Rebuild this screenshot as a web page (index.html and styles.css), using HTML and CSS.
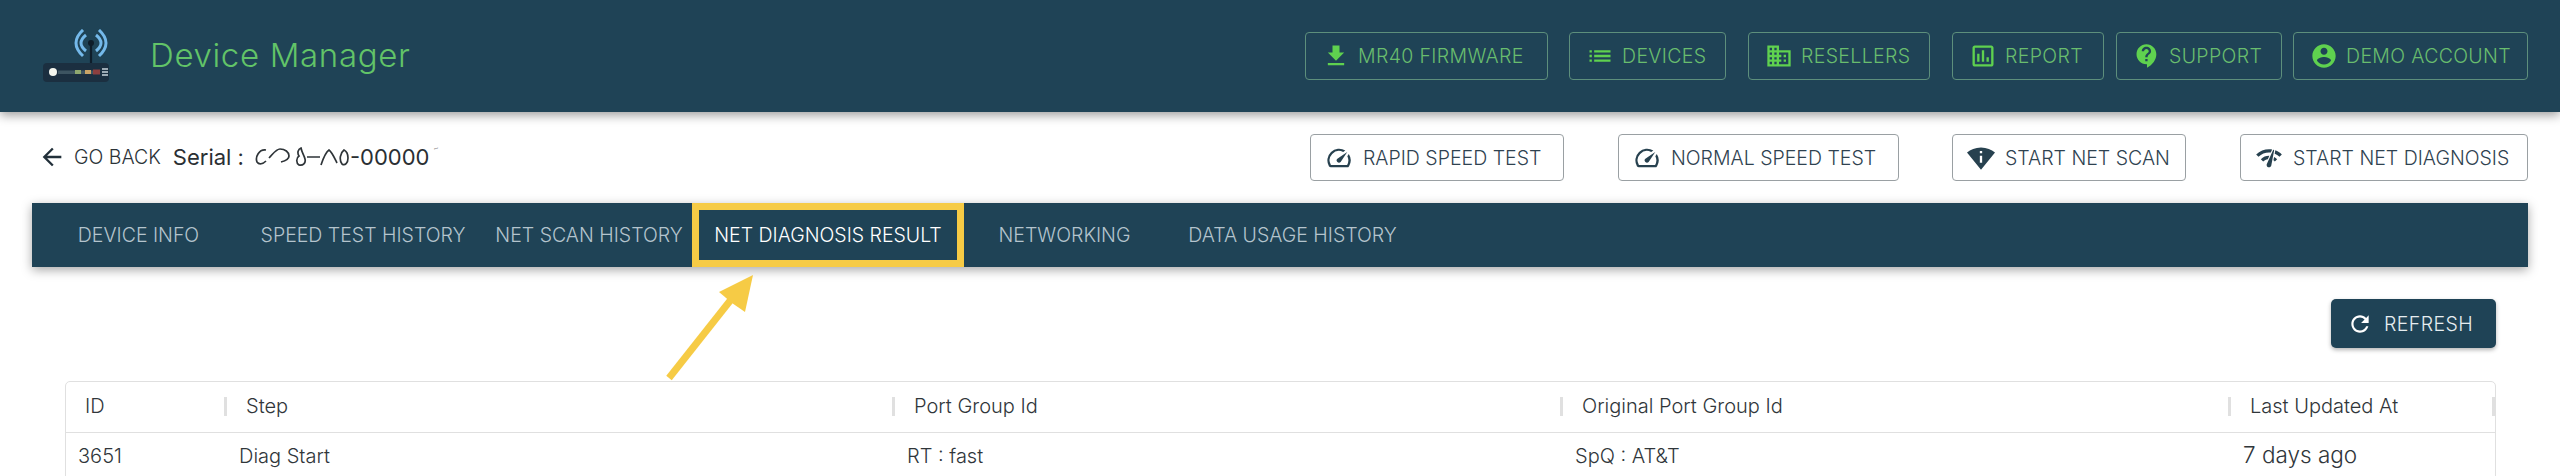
FILE: index.html
```html
<!DOCTYPE html>
<html lang="en">
<head>
<meta charset="utf-8">
<title>Device Manager</title>
<link rel="stylesheet" href="styles.css">
</head>
<body>
<div class="page">
  <header class="topbar">
    <div class="brand">
      <svg class="logo" viewBox="0 0 66 54">
        <rect x="0" y="34" width="66" height="19" rx="4" fill="#1b2f40"/>
        <rect x="15" y="41.5" width="40" height="3.5" fill="#3d5461"/>
        <circle cx="10" cy="43" r="4" fill="#f4f6ee"/>
        <rect x="32" y="41" width="6" height="4" fill="#8fa86f"/>
        <rect x="42" y="41" width="6" height="4" fill="#c9a467"/>
        <rect x="50" y="40.5" width="7" height="5" fill="#8c3f3f"/>
        <path d="M59 40h6M59 43h6M59 46h6" stroke="#c8d3da" stroke-width="1.4"/>
        <path d="M48 12v22" stroke="#0e1d2a" stroke-width="2.2"/>
        <circle cx="48" cy="14" r="3" fill="#0e1d2a"/>
        <path d="M40 1Q26 14 40 27M56 1Q70 14 56 27M43 6Q33 14 43 22M53 6Q63 14 53 22" fill="none" stroke="#74b9ea" stroke-width="3"/>
      </svg>
      <span class="brand-name">Device Manager</span>
    </div>
    <nav class="topnav">
      <a class="navbtn"><svg viewBox="0 0 24 24"><path d="M19 9h-4V3H9v6H5l7 7 7-7zM5 18v2h14v-2H5z"/></svg>MR40 FIRMWARE</a>
      <a class="navbtn"><svg viewBox="0 0 24 24"><path d="M3 13h2v-2H3v2zm0 4h2v-2H3v2zm0-8h2V7H3v2zm4 4h14v-2H7v2zm0 4h14v-2H7v2zM7 7v2h14V7H7z"/></svg>DEVICES</a>
      <a class="navbtn"><svg viewBox="0 0 24 24"><path d="M12 7V3H2v18h20V7H12zM6 19H4v-2h2v2zm0-4H4v-2h2v2zm0-4H4V9h2v2zm0-4H4V5h2v2zm4 12H8v-2h2v2zm0-4H8v-2h2v2zm0-4H8V9h2v2zm0-4H8V5h2v2zm10 12h-8v-2h2v-2h-2v-2h2v-2h-2V9h8v10zm-2-8h-2v2h2v-2zm0 4h-2v2h2v-2z"/></svg>RESELLERS</a>
      <a class="navbtn"><svg viewBox="0 0 24 24"><path d="M19 3H5c-1.1 0-2 .9-2 2v14c0 1.1.9 2 2 2h14c1.1 0 2-.9 2-2V5c0-1.1-.9-2-2-2zm0 16H5V5h14v14zM7 10h2v7H7zm4-3h2v10h-2zm4 6h2v4h-2z"/></svg>REPORT</a>
      <a class="navbtn"><svg viewBox="0 0 24 24"><path d="M11.5 2C6.81 2 3 5.81 3 10.5S6.81 19 11.5 19h.5v3c4.86-2.34 8-7 8-11.5C20 5.81 16.19 2 11.5 2zm1 14.5h-2v-2h2v2zm0-3.5h-2c0-3.25 3-3 3-5 0-1.1-.9-2-2-2s-2 .9-2 2h-2c0-2.21 1.79-4 4-4s4 1.79 4 4c0 2.5-3 2.75-3 5z"/></svg>SUPPORT</a>
      <a class="navbtn"><svg viewBox="0 0 24 24"><path d="M12 2C6.48 2 2 6.48 2 12s4.48 10 10 10 10-4.48 10-10S17.52 2 12 2zm0 3c1.66 0 3 1.34 3 3s-1.34 3-3 3-3-1.34-3-3 1.34-3 3-3zm0 14.2c-2.5 0-4.71-1.28-6-3.22.03-1.99 4-3.08 6-3.08 1.99 0 5.97 1.09 6 3.08-1.29 1.94-3.5 3.22-6 3.22z"/></svg>DEMO ACCOUNT</a>
    </nav>
  </header>

  <main class="content">
    <div class="toolbar">
      <div class="crumbs">
        <a class="back"><svg viewBox="0 0 24 24"><path d="M20 11H7.83l5.59-5.59L12 4l-8 8 8 8 1.41-1.41L7.83 13H20v-2z"/></svg>GO BACK</a>
        <div class="serial"><span>Serial :</span><svg class="scribble" viewBox="0 0 95 24"><path d="M11 5C4 4 0 12 2 17c2 3 6 2 9-1M14 13c4-4 7-9 11-9 5 0 9 3 9 7 0 3-4 5-8 6M46 3c-3 1-4 5-2 8-3 2-3 7 0 9 4 1 7-2 6-6-1-4-3-6-4-11zM52 12h13M66 20c2-6 5-13 8-15 3 2 6 9 8 13M89 5c-4 3-5 10-2 14 3 2 6-1 6-6 0-4-2-7-4-8z" fill="none" stroke="#2e3438" stroke-width="1.7"/></svg><span>-00000</span><span class="serial-tick">˜</span></div>
      </div>
      <div class="actions">
        <button class="action"><svg viewBox="0 0 24 24"><path d="M20.38 8.57l-1.23 1.85a8 8 0 0 1-.22 7.58H5.07A8 8 0 0 1 15.58 6.85l1.85-1.23A10 10 0 0 0 3.35 19a2 2 0 0 0 1.72 1h13.85a2 2 0 0 0 1.74-1 10 10 0 0 0-.27-10.44zm-9.79 6.84a2 2 0 0 0 2.83 0l5.66-8.49-8.49 5.66a2 2 0 0 0 0 2.83z"/></svg>RAPID SPEED TEST</button>
        <button class="action"><svg viewBox="0 0 24 24"><path d="M20.38 8.57l-1.23 1.85a8 8 0 0 1-.22 7.58H5.07A8 8 0 0 1 15.58 6.85l1.85-1.23A10 10 0 0 0 3.35 19a2 2 0 0 0 1.72 1h13.85a2 2 0 0 0 1.74-1 10 10 0 0 0-.27-10.44zm-9.79 6.84a2 2 0 0 0 2.83 0l5.66-8.49-8.49 5.66a2 2 0 0 0 0 2.83z"/></svg>NORMAL SPEED TEST</button>
        <button class="action"><svg viewBox="0 0 24 24"><path d="M12 3C6.95 3 3.15 4.85 0 7.23L12 22 24 7.25C20.85 4.87 17.05 3 12 3zm1 13h-2v-6h2v6zm-2-8V6h2v2h-2z"/></svg>START NET SCAN</button>
        <button class="action"><svg viewBox="0 0 24 24"><path d="M15.9 5c-.17 0-.32.09-.41.23l-.07.15-5.18 11.65c-.16.29-.26.61-.26.96 0 1.11.9 2.01 2.01 2.01.96 0 1.77-.68 1.96-1.59l.01-.03L16.4 5.5c0-.28-.22-.5-.5-.5zM1 9l2 2c2.88-2.88 6.79-4.08 10.53-3.62l1.19-2.68C9.89 3.84 4.74 5.27 1 9zm20 2l2-2c-1.64-1.64-3.55-2.82-5.59-3.57l-.53 2.82c1.5.62 2.9 1.53 4.12 2.75zm-4 4l2-2c-.8-.8-1.7-1.42-2.66-1.89l-.55 2.92c.42.27.83.59 1.21.97zM5 13l2 2c1.13-1.13 2.56-1.79 4.03-2l1.28-2.88c-2.63-.08-5.3.87-7.31 2.88z"/></svg>START NET DIAGNOSIS</button>
      </div>
    </div>

    <div class="tabs">
      <a class="tab">DEVICE INFO</a>
      <a class="tab">SPEED TEST HISTORY</a>
      <a class="tab">NET SCAN HISTORY</a>
      <a class="tab tab-active">NET DIAGNOSIS RESULT</a>
      <a class="tab">NETWORKING</a>
      <a class="tab">DATA USAGE HISTORY</a>
    </div>

    <div class="refresh-row">
      <button class="refresh"><svg viewBox="0 0 24 24"><path d="M17.65 6.35C16.2 4.9 14.21 4 12 4c-4.42 0-7.99 3.58-7.99 8s3.57 8 7.99 8c3.73 0 6.84-2.55 7.73-6h-2.08c-.82 2.33-3.04 4-5.65 4-3.31 0-6-2.69-6-6s2.69-6 6-6c1.66 0 3.14.69 4.22 1.78L13 11h7V4l-2.35 2.35z"/></svg>REFRESH</button>
    </div>

    <div class="grid-card">
      <div class="grid-row grid-head">
        <div class="th"><span>ID</span><i class="sep"></i></div>
        <div class="th"><span>Step</span><i class="sep"></i></div>
        <div class="th"><span>Port Group Id</span><i class="sep"></i></div>
        <div class="th"><span>Original Port Group Id</span><i class="sep"></i></div>
        <div class="th"><span>Last Updated At</span><i class="sep"></i></div>
      </div>
      <div class="grid-row grid-body">
        <div class="td">3651</div>
        <div class="td">Diag Start</div>
        <div class="td">RT : fast</div>
        <div class="td">SpQ : AT&amp;T</div>
        <div class="td td-time">7 days ago</div>
      </div>
    </div>
  </main>

  <!-- annotation pointing at the active tab -->
  <svg class="pointer" viewBox="0 0 100 110">
    <path d="M3 103L71 17" stroke="#f6cb45" stroke-width="7" fill="none"/>
    <path d="M87 0L53 17L66 28L79 37Z" fill="#f6cb45"/>
  </svg>
</div>
</body>
</html>
```

FILE: styles.css
```css
* {
    box-sizing: border-box;
}
html, body {
    margin: 0;
    height: 100%;
}
body {
    background: #fff;
    color: #2f3b42;
    font-family: "Inter", "Liberation Sans", sans-serif;
    font-weight: 300;
}
.page {
    position: relative;
    height: 100vh;
    overflow: hidden;
}

/* top bar */
.topbar {
    display: flex;
    align-items: center;
    justify-content: space-between;
    height: 112px;
    padding: 0 32px 0 43px;
    background: #1f4356;
    box-shadow: 0 3px 10px rgba(0, 0, 0, 0.4);
    position: relative;
}
.brand {
    display: flex;
    align-items: center;
}
.logo {
    width: 66px;
    height: 54px;
    margin-top: -1px;
}
.brand-name {
    margin-left: 41px;
    margin-top: -2px;
    color: #62c468;
    font-size: 33px;
    letter-spacing: 0.65px;
}
.topnav {
    display: flex;
}
.navbtn {
    display: flex;
    align-items: center;
    height: 48px;
    padding-left: 16px;
    border: 1px solid #5d8f7c;
    border-radius: 4px;
    color: #69bd6e;
    font-size: 19.5px;
    letter-spacing: 0.35px;
    white-space: nowrap;
}
.navbtn svg {
    width: 28px;
    height: 28px;
    margin-right: 8px;
    fill: #5fd14f;
    flex: none;
}
.navbtn:nth-child(1) { width: 243px; }
.navbtn:nth-child(2) { width: 157px; margin-left: 21px; }
.navbtn:nth-child(3) { width: 182px; margin-left: 22px; }
.navbtn:nth-child(4) { width: 152px; margin-left: 22px; }
.navbtn:nth-child(5) { width: 166px; margin-left: 12px; }
.navbtn:nth-child(6) { width: 235px; margin-left: 11px; }

/* toolbar */
.content {
    padding: 22px 32px 0;
}
.toolbar {
    display: flex;
    align-items: center;
    justify-content: space-between;
    height: 47px;
}
.crumbs {
    display: flex;
    align-items: center;
    padding: 0 0 2px 6px;
}
.back {
    display: flex;
    align-items: center;
    font-size: 19.5px;
    color: #2b3338;
    white-space: nowrap;
}
.back svg {
    width: 28px;
    height: 28px;
    margin-right: 8px;
    fill: #22303a;
}
.serial {
    display: flex;
    align-items: center;
    margin-left: 12px;
    font-size: 22px;
    font-weight: 400;
    color: #2a2f33;
    white-space: nowrap;
}
.scribble {
    width: 95px;
    height: 24px;
    margin-left: 11px;
}
.serial-tick {
    margin-left: 3px;
    margin-top: -8px;
    font-size: 14px;
    color: #a8a8a8;
}
.actions {
    display: flex;
}
.action {
    display: flex;
    align-items: center;
    height: 47px;
    padding: 0 0 0 14px;
    background: #fff;
    border: 1px solid #9aa0a3;
    border-radius: 4px;
    color: #2f4250;
    font-family: inherit;
    font-size: 19.5px;
    font-weight: 300;
    white-space: nowrap;
}
.action svg {
    width: 28px;
    height: 28px;
    margin-right: 10px;
    fill: #27414f;
    flex: none;
}
.action:nth-child(1) { width: 254px; }
.action:nth-child(2) { width: 281px; margin-left: 54px; }
.action:nth-child(3) { width: 234px; margin-left: 53px; }
.action:nth-child(4) { width: 288px; margin-left: 54px; }

/* tabs */
.tabs {
    display: grid;
    grid-template-columns: 208px 246px 206px 272px 201px 255px;
    height: 64px;
    margin-top: 22px;
    background: #1f4356;
    box-shadow: 0 3px 10px rgba(0, 0, 0, 0.35);
}
.tab {
    display: flex;
    align-items: center;
    justify-content: center;
    color: #b4c4cd;
    font-size: 19.5px;
    white-space: nowrap;
}
.tab:first-child {
    padding-left: 5px;
}
.tab-active {
    border: 7px solid #f6cb45;
    color: #fff;
}

/* refresh */
.refresh-row {
    display: flex;
    justify-content: flex-end;
    margin-top: 32px;
    padding-right: 32px;
}
.refresh {
    display: flex;
    align-items: center;
    width: 165px;
    height: 49px;
    padding: 0 0 0 16px;
    background: #1f4356;
    border: 0;
    border-radius: 5px;
    box-shadow: 0 2px 4px rgba(0, 0, 0, 0.3);
    color: #e6edf0;
    font-family: inherit;
    font-size: 19.5px;
    font-weight: 300;
    letter-spacing: 0.4px;
}
.refresh svg {
    width: 26px;
    height: 26px;
    margin-right: 11px;
    fill: #fff;
}

/* data grid */
.grid-card {
    margin: 33px 32px 0 33px;
    border: 1px solid #e0e0e0;
    border-radius: 5px;
}
.grid-row {
    display: grid;
    grid-template-columns: 161px 668px 668px 668px 264px;
}
.grid-head {
    height: 51px;
    border-bottom: 1px solid #e0e0e0;
}
.th {
    display: flex;
    align-items: center;
    justify-content: space-between;
    padding: 0 0 2px 19px;
    font-size: 20px;
    color: #30363a;
}
.sep {
    width: 3px;
    height: 19px;
    background: #e0e0e0;
}
.grid-body {
    height: 60px;
}
.td {
    padding: 11px 0 0 12px;
    font-size: 20px;
    color: #30363a;
}
.td-time {
    padding-top: 8px;
    font-size: 22.5px;
}

/* annotation */
.pointer {
    position: absolute;
    left: 666px;
    top: 275px;
    width: 100px;
    height: 110px;
}
```
